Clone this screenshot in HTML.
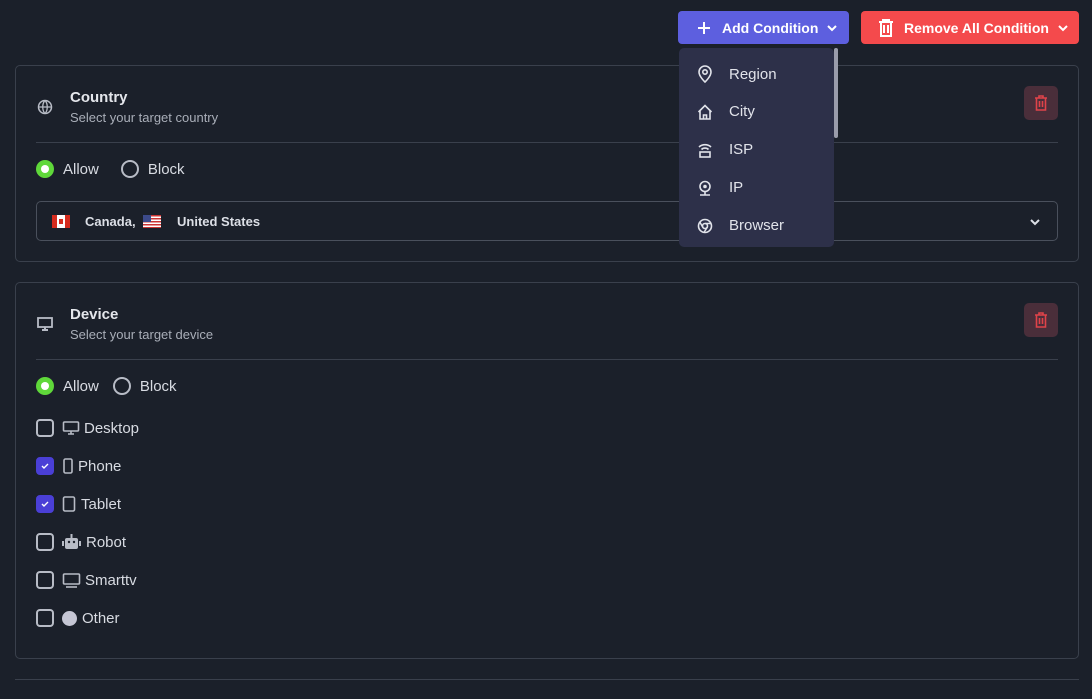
<!DOCTYPE html>
<html><head><style>
*{box-sizing:border-box;margin:0;padding:0}
body{width:1092px;height:699px;background:#1b202a;font-family:"Liberation Sans",sans-serif;color:#d8dbe2;position:relative;overflow:hidden}
.abs{position:absolute}
.btn{position:absolute;top:11px;height:33px;border-radius:4px;color:#fff;font-weight:bold;font-size:14px;display:flex;align-items:center}
.card{position:absolute;left:15px;width:1064px;border:1px solid #3a404c;border-radius:5px}
.title{position:absolute;left:54px;font-weight:bold;font-size:15px;color:#e4e6eb}
.sub{position:absolute;left:54px;font-size:13px;color:#a9aeb8}
.div{position:absolute;left:20px;right:20px;height:1px;background:#3a404c}
.del{position:absolute;right:20px;width:34px;height:34px;border-radius:5px;background:#4a2e3a;display:flex;align-items:center;justify-content:center}
.rad{position:absolute;display:flex;align-items:center;font-size:15px;color:#d8dbe2}
.on{width:18px;height:18px;border-radius:50%;background:#5fd83a;display:inline-flex;align-items:center;justify-content:center;margin-right:9px}
.on i{width:8px;height:8px;border-radius:50%;background:#fff}
.off{width:18px;height:18px;border-radius:50%;border:2px solid #b8bcc6;display:inline-block;margin-right:9px}
.cb{position:absolute;left:20px;display:flex;align-items:center;font-size:15px}
.box{width:18px;height:18px;border:2px solid #b8bcc6;border-radius:4px;margin-right:8px;display:inline-flex;align-items:center;justify-content:center}
.chk{background:#4a3fd6;border-color:#4a3fd6}
.dd{position:absolute;left:679px;top:48px;width:155px;height:199px;background:#2d3049;border-radius:5px}
.it{position:absolute;left:18px;display:flex;align-items:center;font-size:15px;color:#e1e3ea}
.it svg{margin-right:16px}
</style></head><body>
<div class="btn" style="left:678px;width:171px;background:#5d5fdf">
<svg width="12" height="12" viewBox="0 0 12 12" style="margin-left:20px;margin-right:12px"><path d="M6 0v12M0 6h12" stroke="#fff" stroke-width="2"/></svg>Add Condition
<svg width="12" height="12" viewBox="0 0 12 12" style="margin-left:8px"><path d="M2 4l4 4 4-4" stroke="#fff" stroke-width="2" fill="none"/></svg></div>
<div class="btn" style="left:861px;width:218px;background:#f44a4c">
<svg width="16" height="18" viewBox="0 0 16 18" style="margin-left:17px;margin-right:10px"><path d="M1 3h14M5 3V1h6v2M3 3v14h10V3M6 6v8M10 6v8" stroke="#fff" stroke-width="2" fill="none"/></svg>Remove All Condition
<svg width="12" height="12" viewBox="0 0 12 12" style="margin-left:8px"><path d="M2 4l4 4 4-4" stroke="#fff" stroke-width="2" fill="none"/></svg></div>

<div class="card" style="top:65px;height:197px">
<svg class="abs" style="left:21px;top:33px" width="16" height="16" viewBox="0 0 16 16"><circle cx="8" cy="8" r="6.5" stroke="#b8bcc6" stroke-width="1.5" fill="none"/><path d="M1.5 8h13M8 1.5c-3 3-3 10 0 13M8 1.5c3 3 3 10 0 13" stroke="#b8bcc6" stroke-width="1.3" fill="none"/></svg>
<div class="title" style="top:23px">Country</div>
<div class="sub" style="top:44px">Select your target country</div>
<div class="del" style="top:20px"><svg width="14" height="16" viewBox="0 0 14 16"><path d="M1 3h12M5 3V1h4v2M2.5 3v12h9V3M5.5 6v6M8.5 6v6" stroke="#e0434a" stroke-width="1.6" fill="none"/></svg></div>
<div class="div" style="top:76px"></div>
<div class="rad" style="left:20px;top:94px"><span class="on"><i></i></span>Allow<span class="off" style="margin-left:22px"></span>Block</div>
<div class="abs" style="left:20px;top:135px;width:1022px;height:40px;border:1px solid #4a505c;border-radius:5px;font-size:13px;font-weight:bold;color:#dcdfe6">
<span class="abs" style="left:15px;top:13px;width:18px;height:13px;background:linear-gradient(90deg,#d52b1e 28%,#fff 28%,#fff 72%,#d52b1e 72%)"><span class="abs" style="left:7px;top:4px;width:4px;height:5px;background:#d52b1e"></span></span>
<span class="abs" style="left:48px;top:12px">Canada,</span>
<span class="abs" style="left:106px;top:13px;width:18px;height:13px;background:repeating-linear-gradient(#c33 0 1.5px,#fff 1.5px 3px)"><span class="abs" style="left:0;top:0;width:8px;height:7px;background:#3c4a8a"></span></span>
<span class="abs" style="left:140px;top:12px">United States</span>
<svg class="abs" style="right:16px;top:14px" width="12" height="12" viewBox="0 0 12 12"><path d="M2 4l4 4 4-4" stroke="#dcdfe6" stroke-width="2" fill="none"/></svg>
</div>
</div>

<div class="card" style="top:282px;height:377px">
<svg class="abs" style="left:21px;top:34px" width="16" height="15" viewBox="0 0 16 15"><rect x="1" y="1" width="14" height="9" stroke="#b8bcc6" stroke-width="1.8" fill="none"/><path d="M5 13h6M8 10v3" stroke="#b8bcc6" stroke-width="2"/></svg>
<div class="title" style="top:23px">Device</div>
<div class="sub" style="top:44px">Select your target device</div>
<div class="del" style="top:20px"><svg width="14" height="16" viewBox="0 0 14 16"><path d="M1 3h12M5 3V1h4v2M2.5 3v12h9V3M5.5 6v6M8.5 6v6" stroke="#e0434a" stroke-width="1.6" fill="none"/></svg></div>
<div class="div" style="top:76px"></div>
<div class="rad" style="left:20px;top:94px"><span class="on"><i></i></span>Allow<span class="off" style="margin-left:14px"></span>Block</div>
<div class="cb" style="top:136px"><span class="box"></span><svg width="18" height="15" viewBox="0 0 18 15" style="margin-right:4px"><rect x="1.5" y="1" width="15" height="9" rx="1" stroke="#b8bcc6" stroke-width="1.6" fill="none"/><path d="M6 13h6M9 10v3" stroke="#b8bcc6" stroke-width="1.6"/></svg>Desktop</div>
<div class="cb" style="top:174px"><span class="box chk"><svg width="10" height="10" viewBox="0 0 10 10"><path d="M2 5l2 2 4-4" stroke="#fff" stroke-width="1.4" fill="none"/></svg></span><svg width="12" height="16" viewBox="0 0 12 16" style="margin-right:4px"><rect x="2" y="1" width="8" height="14" rx="1.5" stroke="#b8bcc6" stroke-width="1.6" fill="none"/></svg>Phone</div>
<div class="cb" style="top:212px"><span class="box chk"><svg width="10" height="10" viewBox="0 0 10 10"><path d="M2 5l2 2 4-4" stroke="#fff" stroke-width="1.4" fill="none"/></svg></span><svg width="14" height="16" viewBox="0 0 14 16" style="margin-right:5px"><rect x="1.5" y="1" width="11" height="14" rx="1.5" stroke="#b8bcc6" stroke-width="1.6" fill="none"/></svg>Tablet</div>
<div class="cb" style="top:250px"><span class="box"></span><svg width="19" height="16" viewBox="0 0 19 16" style="margin-right:5px"><rect x="3" y="4" width="13" height="11" rx="2" fill="#b8bcc6"/><rect x="0" y="7" width="2" height="5" fill="#b8bcc6"/><rect x="17" y="7" width="2" height="5" fill="#b8bcc6"/><rect x="8.5" y="0" width="2" height="4" fill="#b8bcc6"/><circle cx="7" cy="8" r="1.2" fill="#1b202a"/><circle cx="12" cy="8" r="1.2" fill="#1b202a"/></svg>Robot</div>
<div class="cb" style="top:288px"><span class="box"></span><svg width="19" height="15" viewBox="0 0 19 15" style="margin-right:4px"><rect x="1.5" y="1" width="16" height="10" rx="1" stroke="#b8bcc6" stroke-width="1.6" fill="none"/><path d="M4 14h11" stroke="#b8bcc6" stroke-width="1.6"/></svg>Smarttv</div>
<div class="cb" style="top:326px"><span class="box"></span><span style="width:15px;height:15px;border-radius:50%;background:#c5c6d4;margin-right:5px;display:inline-block"></span>Other</div>
</div>
<div class="abs" style="left:15px;top:679px;width:1064px;height:1px;background:#3a404c"></div>

<div class="dd">
<div class="abs" style="left:155px;top:0;width:4px;height:90px;background:#9a9cab;border-radius:2px"></div>
<div class="it" style="top:17px"><svg width="16" height="18" viewBox="0 0 16 18"><path d="M8 17s-6-5.5-6-10a6 6 0 0 1 12 0c0 4.5-6 10-6 10z" stroke="#e1e3ea" stroke-width="1.6" fill="none"/><circle cx="8" cy="7" r="2.2" stroke="#e1e3ea" stroke-width="1.6" fill="none"/></svg>Region</div>
<div class="it" style="top:55px"><svg width="16" height="16" viewBox="0 0 16 16"><path d="M1.5 8L8 1.5 14.5 8M3 6.5V15h10V6.5M6.5 15v-4h3v4" stroke="#e1e3ea" stroke-width="1.6" fill="none"/></svg>City</div>
<div class="it" style="top:93px"><svg width="16" height="16" viewBox="0 0 16 16"><path d="M2 5a9 9 0 0 1 12 0M4.5 7.5a5 5 0 0 1 7 0" stroke="#e1e3ea" stroke-width="1.6" fill="none"/><rect x="3" y="10" width="10" height="5" stroke="#e1e3ea" stroke-width="1.6" fill="none"/></svg>ISP</div>
<div class="it" style="top:131px"><svg width="16" height="16" viewBox="0 0 16 16"><circle cx="8" cy="6.5" r="5" stroke="#e1e3ea" stroke-width="1.6" fill="none"/><circle cx="8" cy="6.5" r="1.8" fill="#e1e3ea"/><path d="M3 15h10M8 11.5V15" stroke="#e1e3ea" stroke-width="1.6"/></svg>IP</div>
<div class="it" style="top:169px"><svg width="16" height="16" viewBox="0 0 16 16"><circle cx="8" cy="8" r="6.5" stroke="#e1e3ea" stroke-width="1.6" fill="none"/><circle cx="8" cy="8" r="2.5" stroke="#e1e3ea" stroke-width="1.6" fill="none"/><path d="M8 5.5h6M5.8 9.3L2.8 4M10.2 9.3L7 14.4" stroke="#e1e3ea" stroke-width="1.5"/></svg>Browser</div>
</div>
</body></html>
